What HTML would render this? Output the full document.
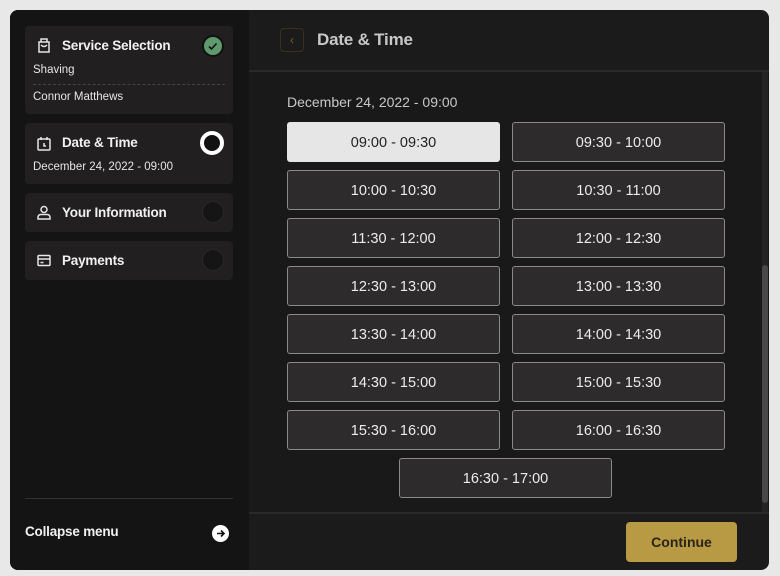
<!DOCTYPE html>
<html><head><style>
*{box-sizing:border-box;margin:0;padding:0}
body{width:780px;height:576px;background:#e8e8e8;font-family:"Liberation Sans",sans-serif;position:relative;overflow:hidden}
.app{position:absolute;left:10px;top:10px;width:759px;height:560px;background:#1c1b1b;border-radius:8px;overflow:hidden}
.side{position:absolute;left:0;top:0;width:239px;height:560px;background:#151414}
.card{position:absolute;left:15px;width:208px;background:#211f1f;border-radius:4px}
.t{position:absolute;left:37px;color:#f1f1f1;font-size:13.5px;font-weight:bold;letter-spacing:-0.2px}
.s{position:absolute;left:8px;color:#e6e6e6;font-size:11.5px}
.ic{position:absolute;left:12px}
.dot{position:absolute;right:9px;width:22px;height:22px;border-radius:50%;background:#161515;border:1px solid #2a2828}
.main{position:absolute;left:239px;top:0;right:0;bottom:0}
.b{position:absolute;width:213px;height:40px;border:1px solid #8a8a8a;border-radius:3px;background:#2d2b2c;color:#ececec;font-size:14.5px;text-align:center;line-height:40px}
</style></head><body>
<div class="app">
 <div class="side">
  <div class="card" style="top:16px;height:88px">
   <svg class="ic" style="top:12px" width="14" height="15" viewBox="0 0 14 15" fill="none" stroke="#e6e6e6" stroke-width="1.5"><path d="M2 4h10v10H2z"/><path d="M4 4V1h6v3"/><path d="M4 7q3 3 6 0"/></svg>
   <div class="t" style="top:12px">Service Selection</div>
   <div class="dot" style="top:9px;background:#5e9a6c;border:2px solid #111"><svg width="18" height="18" viewBox="0 0 18 18" style="position:absolute;left:0;top:0" fill="none" stroke="#111" stroke-width="1.6"><path d="M5 9.5l2.5 2.5 5-5.5"/></svg></div>
   <div class="s" style="top:38px">Shaving</div>
   <div style="position:absolute;left:8px;right:8px;top:58px;border-top:1px dashed #444"></div>
   <div class="s" style="top:65px">Connor Matthews</div>
  </div>
  <div class="card" style="top:113px;height:61px">
   <svg class="ic" style="top:13px" width="14" height="15" viewBox="0 0 14 15" fill="none" stroke="#e6e6e6" stroke-width="1.5"><rect x="1" y="3" width="12" height="11" rx="1"/><path d="M4 1v3M10 1v3M7 7v3h2"/></svg>
   <div class="t" style="top:12px">Date &amp; Time</div>
   <div class="dot" style="top:8px;width:24px;height:24px;border:4px solid #fff;background:#111"></div>
   <div class="s" style="top:38px">December 24, 2022 - 09:00</div>
  </div>
  <div class="card" style="top:183px;height:39px">
   <svg class="ic" style="top:12px" width="14" height="15" viewBox="0 0 14 15" fill="none" stroke="#e6e6e6" stroke-width="1.5"><circle cx="7" cy="4.5" r="3"/><path d="M1 14v-1.5q0-3 3-3h6q3 0 3 3V14z"/></svg>
   <div class="t" style="top:12px">Your Information</div>
   <div class="dot" style="top:8px"></div>
  </div>
  <div class="card" style="top:231px;height:39px">
   <svg class="ic" style="top:12px" width="14" height="15" viewBox="0 0 14 15" fill="none" stroke="#e6e6e6" stroke-width="1.5"><rect x="1" y="2.5" width="12" height="10" rx="1"/><path d="M1 6h12M3.5 9.5h3"/></svg>
   <div class="t" style="top:12px">Payments</div>
   <div class="dot" style="top:8px"></div>
  </div>
  <div style="position:absolute;left:15px;width:208px;top:488px;border-top:1px solid #333"></div>
  <div style="position:absolute;left:15px;top:514px;color:#f1f1f1;font-size:13.5px;font-weight:bold;letter-spacing:-0.2px">Collapse menu</div>
  <div style="position:absolute;left:202px;top:515px;width:17px;height:17px;border-radius:50%;background:#fff"><svg width="17" height="17" viewBox="0 0 17 17" fill="none" stroke="#111" stroke-width="1.6"><path d="M5 8.5h7M9 5.5l3 3-3 3"/></svg></div>
 </div>
 <div class="main">
  <div style="position:absolute;left:31px;top:18px;width:24px;height:24px;border:1px solid #3a2f1f;border-radius:4px;color:#7a5e2c;font-size:12px;text-align:center;line-height:22px">&lsaquo;</div>
  <div style="position:absolute;left:68px;top:20px;color:#c8c8c8;font-size:17px;font-weight:bold;letter-spacing:-0.2px">Date &amp; Time</div>
  <div style="position:absolute;left:0;right:0;top:60px;height:2px;background:#2a2929"></div>
  <div style="position:absolute;left:0;right:0;top:62px;height:442px;background:#1a1919"></div>
  <div style="position:absolute;right:1px;top:62px;width:6px;height:442px;background:#232323"></div>
  <div style="position:absolute;right:1px;top:255px;width:6px;height:238px;background:#484848;border-radius:3px"></div>
  <div style="position:absolute;left:38px;top:84px;color:#c8c8c8;font-size:14px">December 24, 2022 - 09:00</div>
  <div class="b" style="left:38px;top:112px;background:#e6e6e6;color:#222;border-color:#e6e6e6">09:00 - 09:30</div>
  <div class="b" style="left:263px;top:112px">09:30 - 10:00</div>
  <div class="b" style="left:38px;top:160px">10:00 - 10:30</div>
  <div class="b" style="left:263px;top:160px">10:30 - 11:00</div>
  <div class="b" style="left:38px;top:208px">11:30 - 12:00</div>
  <div class="b" style="left:263px;top:208px">12:00 - 12:30</div>
  <div class="b" style="left:38px;top:256px">12:30 - 13:00</div>
  <div class="b" style="left:263px;top:256px">13:00 - 13:30</div>
  <div class="b" style="left:38px;top:304px">13:30 - 14:00</div>
  <div class="b" style="left:263px;top:304px">14:00 - 14:30</div>
  <div class="b" style="left:38px;top:352px">14:30 - 15:00</div>
  <div class="b" style="left:263px;top:352px">15:00 - 15:30</div>
  <div class="b" style="left:38px;top:400px">15:30 - 16:00</div>
  <div class="b" style="left:263px;top:400px">16:00 - 16:30</div>
  <div class="b" style="left:150px;top:448px">16:30 - 17:00</div>
  <div style="position:absolute;left:0;right:0;top:502px;height:2px;background:#2a2929"></div>
  <div style="position:absolute;left:377px;top:512px;width:111px;height:40px;border-radius:4px;background:#b89a45;color:#2a2418;font-size:14px;font-weight:bold;text-align:center;line-height:40px">Continue</div>
 </div>
</div>
</body></html>
